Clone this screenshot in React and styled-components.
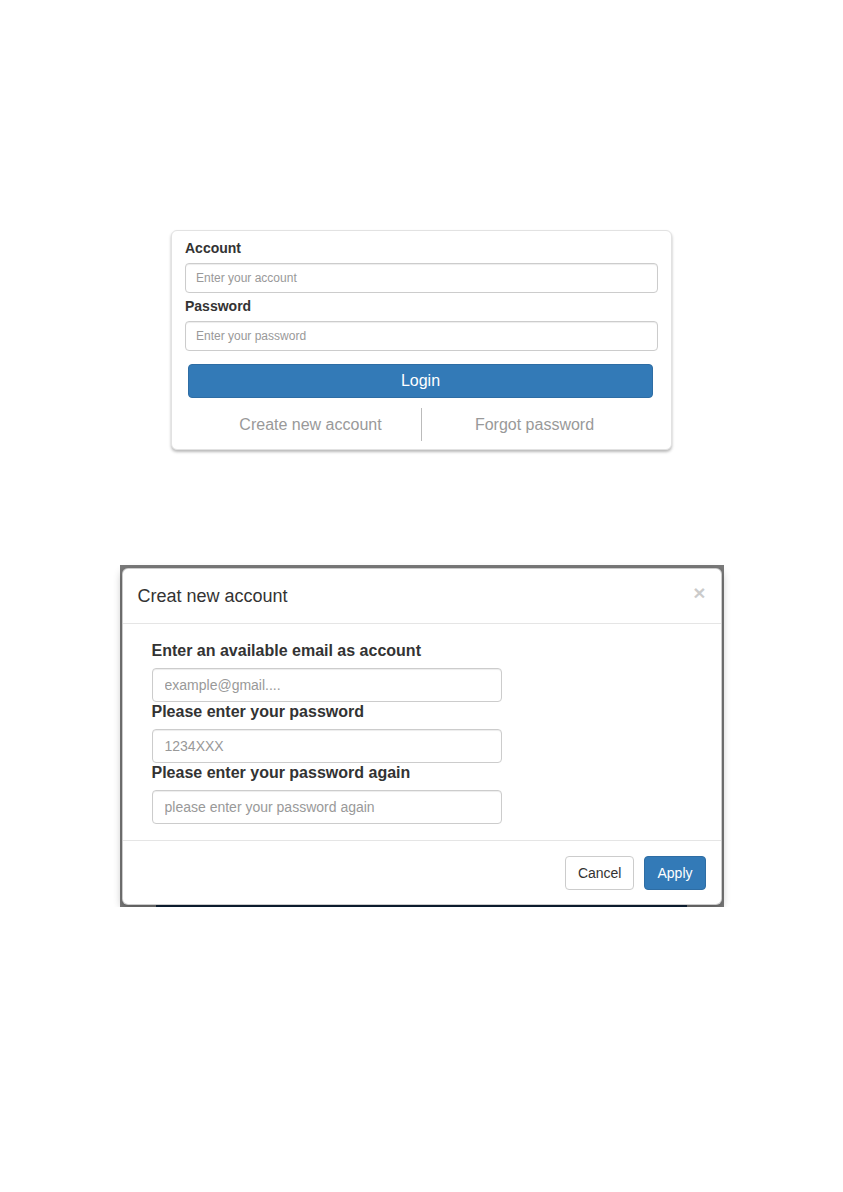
import styled, { createGlobalStyle } from "styled-components";

const GlobalStyle = createGlobalStyle`
  * { box-sizing: border-box; }
  body {
    margin: 0;
    background: #fff;
    font-family: "Liberation Sans", Arial, sans-serif;
    color: #333;
  }
`;

export default function App() {
    return (
        <Page>
            <GlobalStyle />
            <LoginCard>
                <Label>Account</Label>
                <SmallInput placeholder="Enter your account" />
                <Label gap>Password</Label>
                <SmallInput type="password" placeholder="Enter your password" />
                <LoginButton>Login</LoginButton>
                <LinkRow>
                    <LinkCell width={221}>Create new account</LinkCell>
                    <Divider />
                    <LinkCell width={225}>Forgot password</LinkCell>
                </LinkRow>
            </LoginCard>

            <Backdrop>
                <Modal>
                    <ModalHeader>
                        <ModalTitle>Creat new account</ModalTitle>
                        <Close>×</Close>
                    </ModalHeader>
                    <ModalBody>
                        <FieldLabel>Enter an available email as account</FieldLabel>
                        <Input placeholder="example@gmail...." />
                        <FieldLabel>Please enter your password</FieldLabel>
                        <Input placeholder="1234XXX" />
                        <FieldLabel>Please enter your password again</FieldLabel>
                        <Input placeholder="please enter your password again" />
                    </ModalBody>
                    <ModalFooter>
                        <Button>Cancel</Button>
                        <Button primary>Apply</Button>
                    </ModalFooter>
                </Modal>
            </Backdrop>
        </Page>
    );
}

const Page = styled.div`
display: flex;
flex-direction: column;
align-items: center;
padding-top: 230px;
gap: 115px;
`;

const LoginCard = styled.div`
width: 501px;
padding: 7px 13px 8px 13px;
background: #fff;
border: 1px solid #e2e2e2;
border-radius: 6px;
box-shadow: 0 2px 3px rgba(0, 0, 0, 0.28);
display: flex;
flex-direction: column;
`;

const Label = styled.label`
font-size: 14px;
font-weight: bold;
line-height: 20px;
color: #333;
margin-top: ${(p) => (p.gap ? "3px" : "0")};
margin-bottom: 5px;
`;

const SmallInput = styled.input`
height: 30px;
width: 100%;
padding: 5px 10px;
font-family: "Liberation Sans", Arial, sans-serif;
font-size: 12px;
color: #555;
border: 1px solid #ccc;
border-radius: 4px;
box-shadow: inset 0 1px 1px rgba(0, 0, 0, 0.075);
outline: none;
&::placeholder { color: #999; }
`;

const LoginButton = styled.button`
height: 34px;
margin: 13px 5px 0 3px;
background: #337ab7;
border: 1px solid #2e6da4;
border-radius: 4px;
color: #fff;
font-family: "Liberation Sans", Arial, sans-serif;
font-size: 16px;
`;

const LinkRow = styled.div`
display: flex;
align-items: stretch;
height: 33px;
margin: 10px 0 0 15px;
`;

const LinkCell = styled.div`
width: ${(p) => p.width}px;
display: flex;
align-items: center;
justify-content: center;
font-size: 16px;
color: #999;
`;

const Divider = styled.div`
width: 1px;
background: #bbb;
`;

const Backdrop = styled.div`
position: relative;
width: 604px;
padding: 3px 2px 2px 2px;
background: #7b7b7b;
&::after {
    content: "";
    position: absolute;
    left: 36px;
    right: 37px;
    bottom: 0;
    height: 3px;
    background: #10233a;
}
`;

const Modal = styled.div`
position: relative;
z-index: 1;
background: #fff;
border: 1px solid rgba(0, 0, 0, 0.2);
border-radius: 6px;
box-shadow: 0 3px 9px rgba(0, 0, 0, 0.3);
`;

const ModalHeader = styled.div`
display: flex;
align-items: flex-start;
justify-content: space-between;
padding: 15px 15px;
border-bottom: 1px solid #e5e5e5;
`;

const ModalTitle = styled.h4`
margin: 0;
font-size: 18px;
font-weight: normal;
line-height: 24px;
color: #333;
`;

const Close = styled.span`
font-size: 21px;
font-weight: bold;
line-height: 1;
color: #000;
opacity: 0.2;
margin-top: -2px;
`;

const ModalBody = styled.div`
display: flex;
flex-direction: column;
align-items: flex-start;
padding: 17px 15px 16px 29px;
`;

const FieldLabel = styled.label`
font-size: 16px;
font-weight: bold;
line-height: 20px;
color: #333;
margin-bottom: 7px;
`;

const Input = styled.input`
width: 350px;
height: 34px;
padding: 6px 12px;
font-family: "Liberation Sans", Arial, sans-serif;
font-size: 14px;
color: #555;
border: 1px solid #ccc;
border-radius: 4px;
box-shadow: inset 0 1px 1px rgba(0, 0, 0, 0.075);
outline: none;
&::placeholder { color: #999; }
`;

const ModalFooter = styled.div`
display: flex;
justify-content: flex-end;
gap: 10px;
padding: 15px 15px 14px;
border-top: 1px solid #e5e5e5;
`;

const Button = styled.button`
height: 34px;
padding: 6px 12px;
font-family: "Liberation Sans", Arial, sans-serif;
font-size: 14px;
border-radius: 4px;
border: 1px solid ${(p) => (p.primary ? "#2e6da4" : "#ccc")};
background: ${(p) => (p.primary ? "#337ab7" : "#fff")};
color: ${(p) => (p.primary ? "#fff" : "#333")};
`;
